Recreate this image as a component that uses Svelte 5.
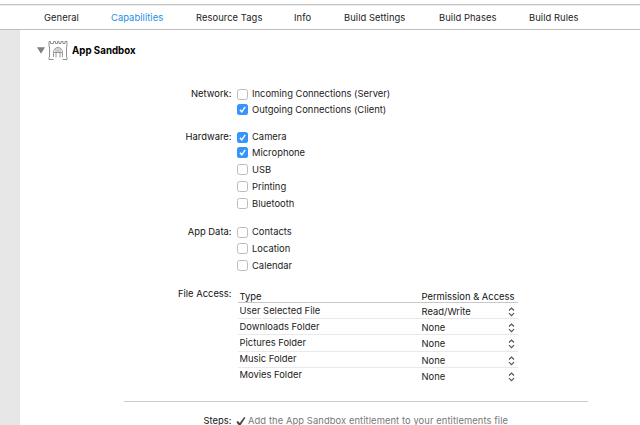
<script>
  const tabs = [
    { label: 'General', width: 67 },
    { label: 'Capabilities', width: 85, active: true },
    { label: 'Resource Tags', width: 98 },
    { label: 'Info', width: 50 },
    { label: 'Build Settings', width: 95 },
    { label: 'Build Phases', width: 90 },
    { label: 'Build Rules', width: 60 }
  ];
  const groups = [
    { label: 'Network:', height: 43, items: [['Incoming Connections (Server)', false], ['Outgoing Connections (Client)', true]] },
    { label: 'Hardware:', height: 95, items: [['Camera', true], ['Microphone', true], ['USB', false], ['Printing', false], ['Bluetooth', false]] },
    { label: 'App Data:', height: 62, items: [['Contacts', false], ['Location', false], ['Calendar', false]] }
  ];
  const files = [
    ['User Selected File', 'Read/Write'],
    ['Downloads Folder', 'None'],
    ['Pictures Folder', 'None'],
    ['Music Folder', 'None'],
    ['Movies Folder', 'None']
  ];
</script>

<div class="window">
  <nav>
    {#each tabs as tab}
      <span class="tab" class:active={tab.active} style:width="{tab.width}px">{tab.label}</span>
    {/each}
  </nav>
  <div class="body">
    <aside></aside>
    <main>
      <header>
        <svg class="tri" width="8" height="7" viewBox="0 0 8 7"><path d="M0 .3h8L4 6.7z" fill="#808080" /></svg>
        <svg class="castle" width="20" height="20" viewBox="0 0 20 20" fill="none" stroke="#8f8f8f">
          <path d="M5.500 19.500h-4.500v-1.800l.5-.7V7L1 6V1.500h1.500v2h3v-2h2v2h2v-2h1.500v2h2v-2h2v2h2v-2H19V6l-.5 1v10l.5.7v1.800h-4.500" />
          <path d="M5.500 17v-4.500c0-6.700 9-6.700 9 0V17M5.500 12.500h9M10 8v4.500M8 8.500v9M12 8.500v9" stroke-width=".9" />
        </svg>
        <h1>App Sandbox</h1>
      </header>

      {#each groups as group}
        <section style:height="{group.height}px">
          <div class="label">{group.label}</div>
          <div class="options">
            {#each group.items as [name, checked]}
              <div class="option" class:checked>
                <span class="box">
                  {#if checked}
                    <svg width="11" height="11" viewBox="0 0 11 11"><path d="M2.9 5.8l1.9 2 3.4-5" fill="none" stroke="#fff" stroke-width="1.4" /></svg>
                  {/if}
                </span>
                <span>{name}</span>
              </div>
            {/each}
          </div>
        </section>
      {/each}

      <section class="access">
        <div class="label">File Access:</div>
        <div class="table">
          <div class="row head"><span>Type</span><span>Permission &amp; Access</span></div>
          {#each files as [name, permission]}
            <div class="row">
              <span>{name}</span>
              <span class="perm">{permission}</span>
              <svg width="7" height="10" viewBox="0 0 7 10"><path d="M1 3.5L3.5 1 6 3.5M1 6.2l2.5 2.5L6 6.2" fill="none" stroke="#555" stroke-width="1.15" /></svg>
            </div>
          {/each}
        </div>
      </section>

      <footer>
        <span class="label">Steps:</span>
        <svg width="10" height="9" viewBox="0 0 10 9"><path d="M.3 5.1l1.6-1 1.8 2L8 .2l1.6.4-5.4 8.1H3z" fill="#444" /></svg>
        <span class="step">Add the App Sandbox entitlement to your entitlements file</span>
      </footer>
    </main>
  </div>
</div>

<style>
  :global(body) { background: #fff; overflow: hidden; }
  .window {
    width: 640px; height: 425px; overflow: hidden; display: flex; flex-direction: column;
    box-sizing: border-box; padding-top: 4px;
    font: 9.4px/16px Inter, "Liberation Sans", sans-serif; letter-spacing: .01px; color: #222;
    white-space: nowrap;
  }
  nav {
    display: flex; align-items: center; box-sizing: border-box; height: 26px; flex: none;
    border-top: 1px solid #c2c2c2; border-bottom: 1px solid #bdbdbd;
    box-shadow: inset 0 1px #eee; padding: 1px 0 0 44px; letter-spacing: .06px;
  }
  .tab { flex: none; }
  .active { color: #278ce8; }
  .body { display: flex; flex: 1; min-height: 0; }
  aside { width: 20px; flex: none; background: #e7e7e7; }
  main { flex: 1; min-width: 0; }
  header { display: flex; align-items: center; height: 40px; margin-bottom: 16px; padding-left: 16.5px; box-sizing: border-box; }
  .castle { margin-left: 3.5px; }
  h1 { font-size: 9.7px; line-height: 16px; margin: 0 0 0 4px; padding-top: 2px; color: #000; font-weight: 700; letter-spacing: .03px; }
  section { display: flex; }
  .label { width: 211.5px; text-align: right; flex: none; color: #111; }
  .options { margin-left: 5.5px; }
  .option { display: flex; align-items: center; height: 17px; gap: 4px; }
  .option:first-child { height: 16px; }
  .option.checked:not(:first-child) { height: 15px; }
  .checked + .option:not(.checked) { margin-top: 1px; }
  .box { width: 11px; height: 11px; box-sizing: border-box; border: 1px solid #bcbcbc; border-radius: 2.5px; background: #fff; }
  .checked .box { border: 0; background: #3694fa; }
  .box svg { display: block; }
  .access { height: 115px; }
  .table { width: 280.5px; margin-left: 6px; padding-top: 2px; }
  .row { display: flex; align-items: center; box-sizing: border-box; height: 16.2px; border-bottom: 1px solid #e9e9e9; padding-left: 2px; }
  .row:last-child { border-color: transparent; }
  .row span:first-child { width: 182px; flex: none; }
  .row .perm { flex: 1; position: relative; top: 1.5px; }
  .row svg { margin-right: 3px; position: relative; top: 1.5px; }
  .head { height: 15px; border-color: #c8c8c8; color: #111; padding-top: 3px; }
  footer { display: flex; align-items: center; width: 464px; margin-left: 104px; border-top: 1px solid #cbcbcb; padding-top: 11px; }
  footer .label { width: 107.5px; margin-right: 4px; }
  .step { color: #777; margin-left: 2.5px; letter-spacing: .08px; }
</style>
